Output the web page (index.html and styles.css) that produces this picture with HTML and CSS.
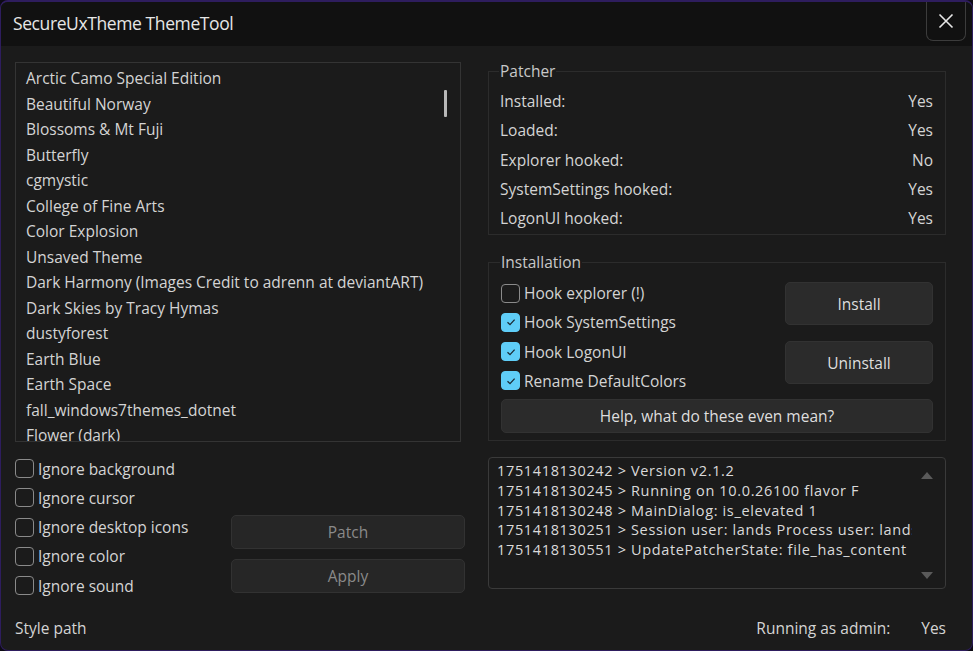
FILE: index.html
```html
<!DOCTYPE html>
<html>
<head>
<meta charset="utf-8">
<link rel="stylesheet" href="styles.css">
</head>
<body>
<div class="window">
  <div class="titlebar">
    <div class="title">SecureUxTheme ThemeTool</div>
    <div class="close">
      <svg width="16" height="16" viewBox="0 0 16 16"><path d="M1.5 1.5 L14.5 14.5 M14.5 1.5 L1.5 14.5" stroke="#e8e8e8" stroke-width="1.6" fill="none"/></svg>
    </div>
  </div>
  <div class="content">
    <div class="main">
      <div class="left">
        <div class="list">
          <div class="items">
            <div class="item">Arctic Camo Special Edition</div>
            <div class="item">Beautiful Norway</div>
            <div class="item">Blossoms &amp; Mt Fuji</div>
            <div class="item">Butterfly</div>
            <div class="item">cgmystic</div>
            <div class="item">College of Fine Arts</div>
            <div class="item">Color Explosion</div>
            <div class="item">Unsaved Theme</div>
            <div class="item">Dark Harmony (Images Credit to adrenn at deviantART)</div>
            <div class="item">Dark Skies by Tracy Hymas</div>
            <div class="item">dustyforest</div>
            <div class="item">Earth Blue</div>
            <div class="item">Earth Space</div>
            <div class="item">fall_windows7themes_dotnet</div>
            <div class="item">Flower (dark)</div>
          </div>
          <div class="vscroll"><div class="thumb"></div></div>
        </div>
        <div class="lower">
          <div class="checks">
            <label class="check"><span class="box"></span>Ignore background</label>
            <label class="check"><span class="box"></span>Ignore cursor</label>
            <label class="check"><span class="box"></span>Ignore desktop icons</label>
            <label class="check"><span class="box"></span>Ignore color</label>
            <label class="check"><span class="box"></span>Ignore sound</label>
          </div>
          <div class="actions">
            <div class="btn disabled">Patch</div>
            <div class="btn disabled">Apply</div>
          </div>
        </div>
      </div>
      <div class="right">
        <fieldset class="group patcher">
          <legend>Patcher</legend>
          <div class="row"><span>Installed:</span><span>Yes</span></div>
          <div class="row"><span>Loaded:</span><span>Yes</span></div>
          <div class="row"><span>Explorer hooked:</span><span>No</span></div>
          <div class="row"><span>SystemSettings hooked:</span><span>Yes</span></div>
          <div class="row"><span>LogonUI hooked:</span><span>Yes</span></div>
        </fieldset>
        <fieldset class="group install">
          <legend>Installation</legend>
          <div class="install-grid">
            <div class="install-checks">
              <label class="check"><span class="box"></span>Hook explorer (!)</label>
              <label class="check"><span class="box on"><svg width="12" height="12" viewBox="0 0 12 12"><path d="M2.5 6.2 L5 8.6 L9.6 3.6" stroke="#1b2a33" stroke-width="1.3" fill="none"/></svg></span>Hook SystemSettings</label>
              <label class="check"><span class="box on"><svg width="12" height="12" viewBox="0 0 12 12"><path d="M2.5 6.2 L5 8.6 L9.6 3.6" stroke="#1b2a33" stroke-width="1.3" fill="none"/></svg></span>Hook LogonUI</label>
              <label class="check"><span class="box on"><svg width="12" height="12" viewBox="0 0 12 12"><path d="M2.5 6.2 L5 8.6 L9.6 3.6" stroke="#1b2a33" stroke-width="1.3" fill="none"/></svg></span>Rename DefaultColors</label>
            </div>
            <div class="install-btns">
              <div class="btn big">Install</div>
              <div class="btn big">Uninstall</div>
            </div>
          </div>
          <div class="btn help">Help, what do these even mean?</div>
        </fieldset>
        <div class="log">
          <div class="log-text">
            <div class="log-line">1751418130242 &gt; Version v2.1.2</div>
            <div class="log-line">1751418130245 &gt; Running on 10.0.26100 flavor F</div>
            <div class="log-line">1751418130248 &gt; MainDialog: is_elevated 1</div>
            <div class="log-line">1751418130251 &gt; Session user: lands Process user: lands</div>
            <div class="log-line">1751418130551 &gt; UpdatePatcherState: file_has_content</div>
          </div>
          <div class="log-scroll">
            <svg width="14" height="10" viewBox="0 0 14 10"><path d="M1 9 L7 2 L13 9 Z" fill="#5a5a5a"/></svg>
            <svg width="14" height="10" viewBox="0 0 14 10"><path d="M1 1 L7 8 L13 1 Z" fill="#5a5a5a"/></svg>
          </div>
        </div>
      </div>
    </div>
    <div class="footer">
      <span class="style-path">Style path</span>
      <div class="admin"><span>Running as admin:</span><span class="admin-val">Yes</span></div>
    </div>
  </div>
</div>
</body>
</html>
```

FILE: styles.css
```css
* { box-sizing: border-box; }
html, body {
  margin: 0;
  padding: 0;
  background: #0d0b14;
  width: 973px;
  height: 651px;
  overflow: hidden;
}
body {
  font-family: "Open Sans", "Noto Sans", sans-serif;
  font-size: 15.5px;
  color: #d4d4d4;
}
.window {
  width: 973px;
  height: 651px;
  border: 1px solid #2e1d5e;
  border-top-width: 2px;
  border-radius: 8px;
  background: #1b1b1b;
  overflow: hidden;
  display: flex;
  flex-direction: column;
}
.titlebar {
  height: 44px;
  background: #111111;
  display: flex;
  align-items: flex-start;
  justify-content: space-between;
  flex-shrink: 0;
}
.title {
  font-size: 17.5px;
  letter-spacing: -0.4px;
  color: #e6e6e6;
  margin: 9px 0 0 12px;
}
.close {
  width: 40px;
  height: 41px;
  margin: -2px 6px 0 0;
  border: 1px solid #3c3c3c;
  border-top: none;
  border-radius: 0 0 7px 7px;
  display: flex;
  align-items: center;
  justify-content: center;
  padding-top: 2px;
}
.content {
  flex: 1;
  display: flex;
  flex-direction: column;
  padding: 16px 26px 0 14px;
}
.main {
  display: flex;
  gap: 23px;
}
.left {
  width: 450px;
  display: flex;
  flex-direction: column;
}
.list {
  width: 446px;
  height: 380px;
  border: 1px solid #343434;
  display: flex;
  overflow: hidden;
  background: #1b1b1b;
}
.items {
  flex: 1;
  padding: 3px 0 0 10px;
  overflow: hidden;
}
.item {
  height: 25.5px;
  line-height: 25.5px;
  white-space: nowrap;
}
.vscroll {
  width: 16px;
  padding: 27px 0 0 0;
  display: flex;
  justify-content: flex-start;
}
.thumb {
  width: 3px;
  height: 27px;
  background: #b8b8b8;
  border-radius: 1px;
}
.lower {
  display: flex;
  margin-top: 17px;
}
.checks {
  width: 216px;
  display: flex;
  flex-direction: column;
  gap: 10.25px;
}
.check {
  display: flex;
  align-items: center;
  height: 19px;
  white-space: nowrap;
}
.box {
  width: 19px;
  height: 19px;
  border: 1.5px solid #8a8a8a;
  border-radius: 4px;
  margin-right: 4px;
  display: inline-flex;
  align-items: center;
  justify-content: center;
  flex-shrink: 0;
}
.box.on {
  background: #5fcdf7;
  border-color: #5fcdf7;
}
.actions {
  flex: 1;
  display: flex;
  flex-direction: column;
  gap: 10px;
  padding-top: 56px;
}
.btn {
  background: #2b2b2b;
  border: 1px solid #323232;
  border-radius: 5px;
  display: flex;
  align-items: center;
  justify-content: center;
  color: #dedede;
}
.btn.disabled {
  height: 34px;
  color: #8a8a8a;
  background: #262626;
}
.right {
  width: 458px;
  display: flex;
  flex-direction: column;
}
.group {
  border: 1px solid #2c2c2c;
  margin: 0;
  padding: 0 12px 0 11px;
}
.group legend {
  padding: 0 1px;
  margin-left: -1px;
  color: #c8c8c8;
  line-height: 18px;
}
.patcher {
  height: 173px;
  padding-top: 7px;
}
.row {
  display: flex;
  justify-content: space-between;
  height: 29.3px;
  line-height: 29.3px;
}
.install {
  height: 188px;
  margin-top: 18px;
  padding-top: 11px;
  padding-left: 12px;
}
.install-grid {
  display: flex;
  justify-content: space-between;
  align-items: flex-start;
  height: 102px;
}
.install-checks {
  display: flex;
  flex-direction: column;
  gap: 10.3px;
  padding-top: 1.5px;
}
.install-btns {
  width: 148px;
  display: flex;
  flex-direction: column;
  gap: 16px;
}
.btn.big {
  height: 43px;
}
.btn.help {
  height: 34px;
  margin-top: 15px;
}
.log {
  margin-top: 16px;
  height: 132px;
  border: 1px solid #3a3a3a;
  border-radius: 4px;
  display: flex;
  padding: 0 0 0 8px;
}
.log-text {
  flex: 1;
  overflow: hidden;
  white-space: nowrap;
  padding-top: 3px;
  font-size: 14.5px;
  letter-spacing: 0.65px;
  color: #dadada;
}
.log-line {
  height: 19.75px;
  line-height: 19.75px;
}
.log-scroll {
  width: 33px;
  display: flex;
  flex-direction: column;
  justify-content: space-between;
  align-items: center;
  padding: 12px 4px 7px 0;
}
.footer {
  display: flex;
  justify-content: space-between;
  align-items: center;
  margin-top: 22px;
}
.admin {
  display: flex;
  gap: 31px;
}
```
